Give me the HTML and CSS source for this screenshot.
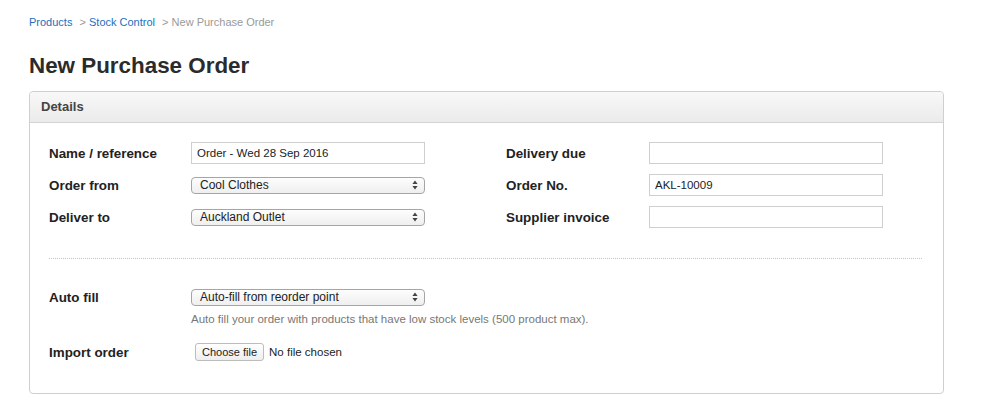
FILE: index.html
```
<!DOCTYPE html>
<html lang="en">

<head>
    <meta charset="UTF-8">
    <meta name="viewport" content="width=device-width, initial-scale=1.0">
    <title>New Purchase Order</title>
    <link rel="stylesheet" href="styles.css">
</head>

<body>
    <div class="crumbs">
        <a href="#">Products</a>
        <span class="sep">&gt;</span> <a href="#">Stock Control</a>
        <span class="sep">&gt;</span> <span class="here">New Purchase Order</span>
    </div>

    <h1 class="title">New Purchase Order</h1>

    <div class="panel">
        <div class="panel-head">Details</div>
        <div class="panel-body">
            <div class="fields">
                <div class="col">
                    <div class="row">
                        <label>Name / reference</label>
                        <input type="text" class="txt" value="Order - Wed 28 Sep 2016">
                    </div>
                    <div class="row">
                        <label>Order from</label>
                        <div class="sel">
                            <span>Cool Clothes</span>
                            <svg width="6" height="10" viewBox="0 0 6 10"><path d="M3 0.5 L5.6 4 H0.4 Z M3 9.5 L5.6 6 H0.4 Z" fill="#444"/></svg>
                        </div>
                    </div>
                    <div class="row">
                        <label>Deliver to</label>
                        <div class="sel">
                            <span>Auckland Outlet</span>
                            <svg width="6" height="10" viewBox="0 0 6 10"><path d="M3 0.5 L5.6 4 H0.4 Z M3 9.5 L5.6 6 H0.4 Z" fill="#444"/></svg>
                        </div>
                    </div>
                </div>
                <div class="col">
                    <div class="row">
                        <label>Delivery due</label>
                        <input type="text" class="txt" value="">
                    </div>
                    <div class="row">
                        <label>Order No.</label>
                        <input type="text" class="txt" value="AKL-10009">
                    </div>
                    <div class="row">
                        <label>Supplier invoice</label>
                        <input type="text" class="txt" value="">
                    </div>
                </div>
            </div>

            <div class="divider"></div>

            <div class="row">
                <label>Auto fill</label>
                <div class="sel">
                    <span>Auto-fill from reorder point</span>
                    <svg width="6" height="10" viewBox="0 0 6 10"><path d="M3 0.5 L5.6 4 H0.4 Z M3 9.5 L5.6 6 H0.4 Z" fill="#444"/></svg>
                </div>
            </div>
            <p class="help">Auto fill your order with products that have low stock levels (500 product max).</p>
            <div class="row">
                <label>Import order</label>
                <div class="file">
                    <button type="button" class="file-btn">Choose file</button>
                    <span>No file chosen</span>
                </div>
            </div>
        </div>
    </div>
</body>

</html>
```

FILE: styles.css
```
body {
    margin: 0px;
    padding: 0px 39px 0px 29px;
    font-family: "Liberation Sans", Arial, sans-serif;
    color: #222;
    background-color: #fff;
}

.crumbs {
    padding-top: 16px;
    font-size: 11px;
    line-height: 13px;
    color: #999;
}

.crumbs a {
    color: #1a6fc0;
    text-decoration: none;
}

.crumbs .sep {
    margin-left: 4px;
}

.title {
    margin: 24px 0px 0px 0px;
    font-size: 22.4px;
    line-height: 26px;
    font-weight: bold;
    color: #2b2b2b;
}

.panel {
    margin-top: 12px;
    border: 1px solid #cfcfcf;
    border-radius: 4px;
}

.panel-head {
    height: 30px;
    line-height: 30px;
    padding-left: 11px;
    font-size: 13px;
    font-weight: bold;
    color: #444;
    background: linear-gradient(#f8f8f8, #ebebeb);
    border-bottom: 1px solid #d4d4d4;
    border-radius: 4px 4px 0px 0px;
}

.panel-body {
    padding: 14px 21px 25px 19px;
}

.fields {
    display: flex;
}

.fields .col:first-child {
    width: 457px;
}

.row {
    display: flex;
    align-items: center;
    height: 32px;
}

.row label {
    width: 142px;
    font-size: 13.4px;
    font-weight: bold;
    color: #222;
}

.fields .col:last-child label {
    width: 143px;
}

.txt {
    box-sizing: border-box;
    width: 234px;
    height: 22px;
    margin: 0px;
    padding: 0px 5px;
    border: 1px solid #cfcfcf;
    font-family: "Liberation Sans", Arial, sans-serif;
    font-size: 11.5px;
    color: #222;
    outline: none;
}

.sel {
    box-sizing: border-box;
    width: 234px;
    height: 17px;
    display: flex;
    align-items: center;
    justify-content: space-between;
    padding: 0px 6px 0px 8px;
    border: 1px solid #a5a5a5;
    border-radius: 4px;
    background: linear-gradient(#fdfdfd, #efefef);
    font-size: 12px;
    color: #222;
}

.divider {
    margin: 25px 0px 22px 0px;
    border-top: 1px dotted #c4c4c4;
}

.help {
    margin: 0px 0px 0px 142px;
    height: 23px;
    font-size: 11.5px;
    line-height: 13px;
    color: #777;
}

.file {
    display: flex;
    align-items: center;
    font-size: 11.5px;
    color: #222;
    padding-left: 4px;
}

.file-btn {
    height: 18px;
    padding: 0px 6px;
    margin-right: 5px;
    border: 1px solid #bdbdbd;
    border-radius: 3px;
    background: linear-gradient(#ffffff, #eeeeee);
    font-family: "Liberation Sans", Arial, sans-serif;
    font-size: 11px;
    color: #222;
}
```
